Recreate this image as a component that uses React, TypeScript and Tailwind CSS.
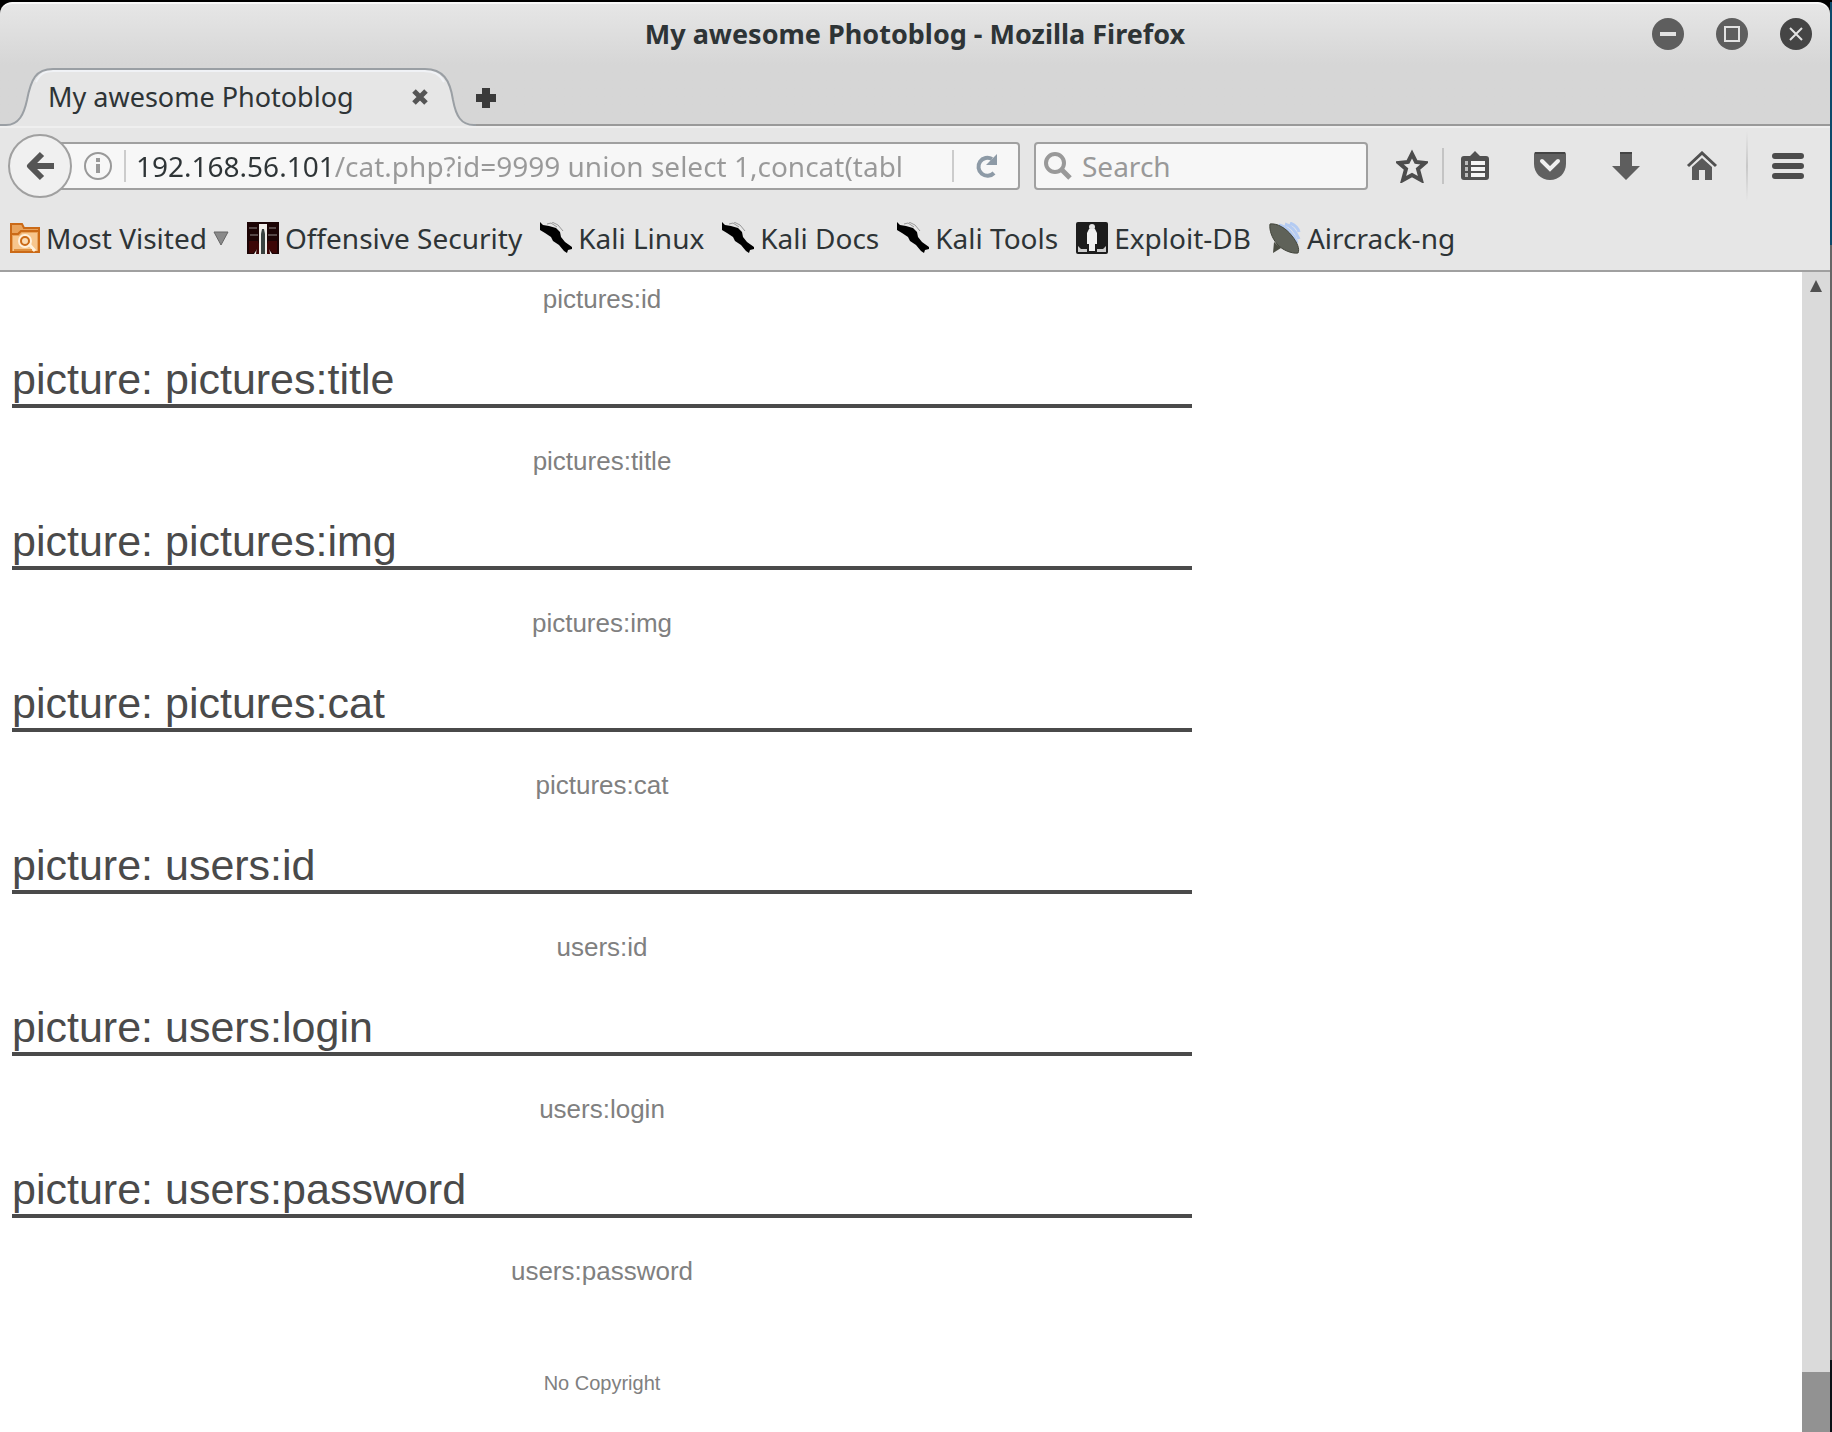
import React from "react";

const sections = ["pictures:title", "pictures:img", "pictures:cat", "users:id", "users:login", "users:password"];

function TabShape() {
  return (
    <svg className="absolute inset-0" width="476" height="58" viewBox="0 0 476 58" aria-hidden="true">
      <path
        d="M0 57H6C19 57 24 46 27 32C31 11 36 1 53 1H425C443 1 450 12 453 32C456 48 461 57 474 57H476V58H0Z"
        fill="#e6e6e6"
      />
      <path d="M36 14C40 6 44 3 54 3H424C434 3 440 6 444 14" fill="none" stroke="#f0f2f6" strokeWidth="2" />
      <path
        d="M0 57H6C19 57 24 46 27 32C31 11 36 1 53 1H425C443 1 450 12 453 32C456 48 461 57 474 57H476"
        fill="none"
        stroke="#9a9fa4"
        strokeWidth="2"
      />
    </svg>
  );
}

function KaliIcon() {
  return (
    <svg width="32" height="32" viewBox="0 0 32 32" aria-hidden="true">
      <path d="M0 0L3 3L9 4L16 6L20 10L21 15L25 20L32 25V27L28 28L27 31L24 29L19 23L13 19L11 15L5 11L0 8Z" fill="#000" />
      <path d="M7 2L11 1L17 5M12 0L18 3L23 9" fill="none" stroke="#999" />
    </svg>
  );
}

function FolderIcon() {
  return (
    <svg width="30" height="30" viewBox="0 0 30 30" aria-hidden="true">
      <path d="M1 29V1H12L14 5H29V29Z" fill="#e9a35c" stroke="#cb6a17" strokeWidth="2" />
      <path d="M2 11H8L11 8H28" fill="none" stroke="#cb6a17" strokeWidth="2" />
      <path d="M3 28V13H9L12 10H27V28Z" fill="#f7c68d" />
      <circle cx="15" cy="18" r="6" fill="#fbdcb4" stroke="#fff1dd" strokeWidth="2" />
      <circle cx="15" cy="18" r="4" fill="none" stroke="#cb6a17" strokeWidth="2" />
      <path d="M19 21L25 28" stroke="#fff1dd" strokeWidth="3" />
      <path d="M4 27H22" stroke="#e0913f" strokeWidth="2" />
    </svg>
  );
}

function OffsecIcon() {
  return (
    <svg width="32" height="32" viewBox="0 0 32 32" aria-hidden="true">
      <rect width="32" height="32" fill="#1c0405" />
      <path d="M2 6H10M3 13H11M22 6H29M21 13H30" stroke="#574848" strokeWidth="2" />
      <path d="M2 19H11V26L6 31H2ZM21 19H30V31H26L21 26Z" fill="#3d0606" />
      <path d="M12 2H20V24L25 32H7L12 24Z" fill="#f1eeea" />
      <path d="M10 24L12 20V32H9ZM22 24L20 20V32H23Z" fill="#3d0606" />
      <path d="M15 7H17L18 12V32H14V12Z" fill="#3a4240" />
    </svg>
  );
}

function ExploitIcon() {
  return (
    <svg width="32" height="32" viewBox="0 0 32 32" aria-hidden="true">
      <rect width="32" height="32" rx="2" fill="#1d1d1d" />
      <circle cx="16" cy="5" r="3" fill="#e6e6e6" />
      <path d="M13 7H19L21 11V22H19V29H13V22H11V11Z" fill="#f2f2f2" />
      <path d="M2 24L5 27H11V30H2ZM30 24L27 27H21V30H30Z" fill="#ccc" />
    </svg>
  );
}

function AircrackIcon() {
  return (
    <svg width="32" height="32" viewBox="0 0 32 32" aria-hidden="true">
      <path d="M10 3C18 5 25 12 28 21M16 2C23 4 27 10 30 17M21 1C26 3 29 6 30 10" fill="none" stroke="#b4cbf2" strokeWidth="3" />
      <path d="M5 20L4 31L12 26Z" fill="#4a4c42" />
      <path d="M1 2C8 1 17 6 23 14C28 20 31 27 29 31C23 32 13 28 8 22C3 16 0 8 1 2Z" fill="#5f6259" stroke="#42453b" />
    </svg>
  );
}

function Bookmark({ icon, label, menu }: { icon: React.ReactNode; label: string; menu?: boolean }) {
  return (
    <a href="#" className="flex items-center gap-[6px] whitespace-nowrap">
      {icon}
      <span>{label}</span>
      {menu && (
        <svg width="16" height="16" viewBox="0 0 16 16" aria-hidden="true">
          <path d="M1 2H15L8 15Z" fill="#8a8a8a" stroke="#666" />
        </svg>
      )}
    </a>
  );
}

function TitleBar() {
  return (
    <div className="flex h-15 items-center px-[18px]">
      <div className="w-40" />
      <h1 className="flex-1 text-center text-[27px] leading-9 font-bold whitespace-nowrap">
        My awesome Photoblog - Mozilla Firefox
      </h1>
      <div className="flex w-40 gap-8">
        <button aria-label="Minimize">
          <svg width="32" height="32" viewBox="0 0 32 32"><circle cx="16" cy="16" r="16" fill="#5e5e5e" /><path d="M8 16H24" stroke="#e2e2e2" strokeWidth="4" /></svg>
        </button>
        <button aria-label="Maximize">
          <svg width="32" height="32" viewBox="0 0 32 32"><circle cx="16" cy="16" r="16" fill="#5e5e5e" /><rect x="9" y="9" width="14" height="14" fill="none" stroke="#e2e2e2" strokeWidth="2" /></svg>
        </button>
        <button aria-label="Close window">
          <svg width="32" height="32" viewBox="0 0 32 32"><circle cx="16" cy="16" r="16" fill="#454545" /><path d="M10 10L22 22M22 10L10 22" stroke="#e2e2e2" strokeWidth="2" /></svg>
        </button>
      </div>
    </div>
  );
}

function NavBar() {
  return (
    <div className="flex h-20 items-center border-t-2 border-[#efefef] pr-[26px] pb-[2px] pl-2">
      <button aria-label="Back" className="z-10 size-16 shrink-0 rounded-full border-2 border-[#a0a0a0] bg-[#f0f0f0] pl-4">
        <svg width="28" height="30" viewBox="0 0 28 30"><path d="M16 3L4 15L16 27M4 15H28" fill="none" stroke="#555" strokeWidth="6" strokeLinejoin="round" /></svg>
      </button>
      <div className="-ml-3 flex h-12 flex-1 items-center rounded-r border-2 border-[#a0a0a0] bg-[#f7f7f7] pl-[22px]">
        <svg width="28" height="28" viewBox="0 0 28 28" className="shrink-0" aria-hidden="true">
          <circle cx="14" cy="14" r="13" fill="none" stroke="#999" strokeWidth="2" />
          <path d="M14 12V21M14 6V10" stroke="#999" strokeWidth="4" />
        </svg>
        <div className="ml-3 h-8 w-[2px] bg-[#ccc]" />
        <input
          aria-label="Address"
          defaultValue="192.168.56.101/cat.php?id=9999 union select 1,concat(table"
          className="ml-[10px] h-10 min-w-0 flex-1 bg-[linear-gradient(90deg,#2e3436_198px,#999_198px)] bg-clip-text text-[28px] text-transparent outline-none"
        />
        <div className="ml-12 h-8 w-[2px] bg-[#ccc]" />
        <button aria-label="Reload" className="px-5">
          <svg width="24" height="26" viewBox="0 0 24 26"><path d="M18 6A9 9 0 1 0 20 20" fill="none" stroke="#8d9aa6" strokeWidth="4" /><path d="M23 1V12H12Z" fill="#8d9aa6" /></svg>
        </button>
      </div>
      <label className="ml-[14px] flex h-12 w-[334px] shrink-0 items-center gap-[10px] rounded border-2 border-[#a0a0a0] bg-[#f7f7f7] px-2">
        <svg width="28" height="28" viewBox="0 0 28 28" className="shrink-0" aria-hidden="true">
          <circle cx="11" cy="11" r="9" fill="none" stroke="#999" strokeWidth="4" />
          <path d="M17 17L26 26" stroke="#999" strokeWidth="5" />
        </svg>
        <input aria-label="Search" placeholder="Search" className="min-w-0 flex-1 bg-transparent text-[28px] outline-none placeholder:text-[#999]" />
      </label>
      <div className="ml-7 flex shrink-0 items-center">
        <button aria-label="Bookmark this page">
          <svg width="32" height="34" viewBox="0 0 32 34"><path d="M16 5L20 13L29 14L22 20L25 31L16 26L7 31L10 20L3 14L12 13Z" fill="none" stroke="#4c4c4c" strokeWidth="4" /></svg>
        </button>
        <div className="ml-[14px] h-9 w-[2px] bg-[#c4c4c4]" />
        <button aria-label="Show bookmarks" className="ml-4">
          <svg width="30" height="30" viewBox="0 0 30 30"><path d="M1 8Q1 5 4 5H10L15 0L20 5H26Q29 5 29 8V26Q29 29 26 29H4Q1 29 1 26Z" fill="#505050" /><path d="M5 12H8M5 18H8M5 24H8" stroke="#bbb" strokeWidth="4" /><path d="M11 12H25M11 18H25M11 24H25" stroke="#f4f4f4" strokeWidth="4" /></svg>
        </button>
        <button aria-label="Pocket" className="ml-11">
          <svg width="32" height="30" viewBox="0 0 32 30"><path d="M0 3Q0 1 2 1H30Q32 1 32 3V13C32 22 25 29 16 29S0 22 0 13Z" fill="#606060" /><path d="M1 2H31" stroke="#444" strokeWidth="2" /><path d="M8 10L16 18L24 10" fill="none" stroke="#f0f0f0" strokeWidth="4" strokeLinecap="round" /></svg>
        </button>
        <button aria-label="Downloads" className="ml-11">
          <svg width="32" height="30" viewBox="0 0 32 30"><path d="M10 1H22V15H30L16 29L2 15H10Z" fill="#5e5e5e" /><path d="M10 2H22" stroke="#444" strokeWidth="2" /></svg>
        </button>
        <button aria-label="Home" className="ml-11">
          <svg width="32" height="30" viewBox="0 0 32 30"><path d="M2 15L16 2L30 15" fill="none" stroke="#505050" strokeWidth="3" /><path d="M6 16L16 7L26 16V29H19V19H13V29H6Z" fill="#5a5a5a" /></svg>
        </button>
        <div className="ml-7 h-[70px] w-[2px] bg-linear-to-b from-transparent via-[#c8c8c8] to-transparent" />
        <button aria-label="Open menu" className="ml-6">
          <svg width="32" height="28" viewBox="0 0 32 28"><path d="M3 4H29M3 14H29M3 24H29" stroke="#4c4c4c" strokeWidth="6" strokeLinecap="round" /></svg>
        </button>
      </div>
    </div>
  );
}

export default function App() {
  return (
    <div className="flex min-h-screen bg-black pt-[2px] font-['Noto_Sans','Open_Sans',sans-serif] text-[#2e3436]">
      <div className="flex min-w-0 flex-1 flex-col bg-white">
        <header className="bg-black">
          <div className="rounded-t-xl border-t-2 border-[#f8f8f8] bg-linear-to-b from-[#e6e6e6] to-[#d6d6d6] to-50%">
            <TitleBar />
            <div className="flex h-[62px] items-end border-b-2 border-[#999]">
              <div className="relative -mb-[2px] flex h-[58px] w-[476px] shrink-0 items-center pr-12 pl-12">
                <TabShape />
                <span className="relative flex-1 text-[27px] leading-9 whitespace-nowrap">My awesome Photoblog</span>
                <button aria-label="Close tab" className="relative">
                  <svg width="16" height="16" viewBox="0 0 16 16"><path d="M2 2L14 14M14 2L2 14" stroke="#555" strokeWidth="5" /></svg>
                </button>
              </div>
              <button aria-label="New tab" className="mb-4">
                <svg width="20" height="20" viewBox="0 0 20 20"><path d="M10 0V20M0 10H20" stroke="#3a3a3a" strokeWidth="8" /></svg>
              </button>
            </div>
          </div>
          <div className="border-b-2 border-[#a0a0a0] bg-[#e6e6e6]">
            <NavBar />
            <nav aria-label="Bookmarks" className="flex h-16 items-center gap-[18px] pl-[10px] text-[28px] leading-9">
              <Bookmark icon={<FolderIcon />} label="Most Visited" menu />
              <Bookmark icon={<OffsecIcon />} label="Offensive Security" />
              <Bookmark icon={<KaliIcon />} label="Kali Linux" />
              <Bookmark icon={<KaliIcon />} label="Kali Docs" />
              <Bookmark icon={<KaliIcon />} label="Kali Tools" />
              <Bookmark icon={<ExploitIcon />} label="Exploit-DB" />
              <Bookmark icon={<AircrackIcon />} label="Aircrack-ng" />
            </nav>
          </div>
        </header>
        <div className="flex flex-1">
          <main className="flex-1 px-3 pt-3 font-['Liberation_Sans',Arial,sans-serif]">
            <div className="max-w-[1180px] text-[#808080]">
              <p className="text-center text-[26px] leading-[30px]">pictures:id</p>
              {sections.map((name) => (
                <section key={name}>
                  <h2 className="mt-10 border-b-4 border-[#4a4a4a] text-[43px] leading-[50px] text-[#4a4a4a]">picture: {name}</h2>
                  <p className="mt-[38px] text-center text-[26px] leading-[30px]">{name}</p>
                </section>
              ))}
              <footer className="mt-[85px] text-center text-[20px] leading-6">No Copyright</footer>
            </div>
          </main>
          <div className="flex w-7 flex-col justify-between bg-[#dadada]">
            <button aria-label="Scroll up" className="flex h-7 items-center justify-center">
              <svg width="12" height="12" viewBox="0 0 12 12"><path d="M6 0L12 12H0Z" fill="#505050" /></svg>
            </button>
            <div className="h-[60px] bg-[#929292]" />
          </div>
        </div>
      </div>
      <div className="w-[2px] bg-[linear-gradient(#0d4a6b_17%,#666_17%,#666_95%,#0a1016_95%)]" />
    </div>
  );
}
